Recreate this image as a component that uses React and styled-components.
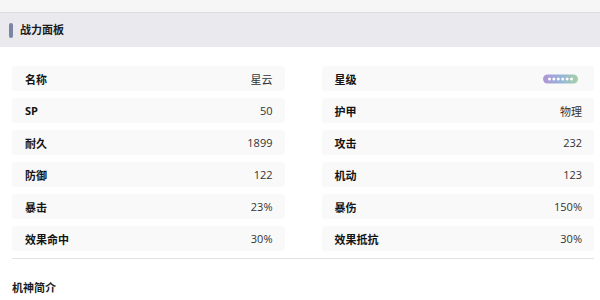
import React from "react";
import styled, { createGlobalStyle } from "styled-components";

const GlobalStyle = createGlobalStyle`
  body {
    margin: 0;
    background: #fff;
    font-family: "Open Sans", "Noto Sans CJK SC", sans-serif;
    color: #222;
  }
`;

const TopStrip = styled.div`
  height: 12px;
  background: #f6f6f6;
  border-bottom: 1px solid #dcdcdc;
`;

const Header = styled.div`
  height: 34px;
  background: #e9e9ee;
  display: flex;
  align-items: center;
  gap: 7px;
  padding-left: 9px;
`;

const Accent = styled.span`
  width: 4px;
  height: 15px;
  border-radius: 2px;
  background: #7b86a6;
`;

const Title = styled.h2`
  margin: 0 0 2px;
  font-size: 11px;
  font-weight: 700;
  color: #1c1c1c;
`;

const Grid = styled.div`
  display: grid;
  grid-template-columns: 1fr 1fr;
  column-gap: 37px;
  row-gap: 7px;
  margin: 19px 6px 0 12px;
`;

const Row = styled.div`
  height: 25px;
  display: flex;
  align-items: center;
  justify-content: space-between;
  padding: 0 12px 0 13px;
  background: #f9f9f9;
  border-radius: 3px;
  font-size: 11px;
`;

const Label = styled.span`
  font-weight: 700;
  color: #141414;
`;

const Value = styled.span`
  display: flex;
  color: #333;
`;

const Divider = styled.hr`
  margin: 7px 6px 0 12px;
  border: none;
  border-top: 1px solid #e2e2e2;
`;

const SectionTitle = styled.h3`
  margin: 20px 0 0 12px;
  font-size: 11px;
  font-weight: 700;
  color: #1c1c1c;
`;

const StarBadge = styled.svg`
  margin-right: 4px;
  filter: blur(0.5px);
  opacity: 0.85;
`;

const Stars = () => (
  <StarBadge width="35" height="10" viewBox="0 0 35 10">
    <defs>
      <linearGradient id="starg" x1="0" x2="1" y1="0" y2="0">
        <stop offset="0" stopColor="#a585cf" />
        <stop offset="0.5" stopColor="#86a7d6" />
        <stop offset="1" stopColor="#95cc98" />
      </linearGradient>
    </defs>
    <rect x="0" y="0.5" width="35" height="9" rx="4.5" fill="url(#starg)" />
    {[0, 1, 2, 3, 4, 5].map((i) => (
      <circle key={i} cx={6.5 + i * 4.4} cy="5" r="1.5" fill="#fff" />
    ))}
  </StarBadge>
);

const stats = [
  ["名称", "星云"],
  ["星级", <Stars key="s" />],
  ["SP", "50"],
  ["护甲", "物理"],
  ["耐久", "1899"],
  ["攻击", "232"],
  ["防御", "122"],
  ["机动", "123"],
  ["暴击", "23%"],
  ["暴伤", "150%"],
  ["效果命中", "30%"],
  ["效果抵抗", "30%"],
];

export default function App() {
  return (
    <>
      <GlobalStyle />
      <TopStrip />
      <Header>
        <Accent />
        <Title>战力面板</Title>
      </Header>
      <Grid>
        {stats.map(([label, value]) => (
          <Row key={label}>
            <Label>{label}</Label>
            <Value>{value}</Value>
          </Row>
        ))}
      </Grid>
      <Divider />
      <SectionTitle>机神简介</SectionTitle>
    </>
  );
}
